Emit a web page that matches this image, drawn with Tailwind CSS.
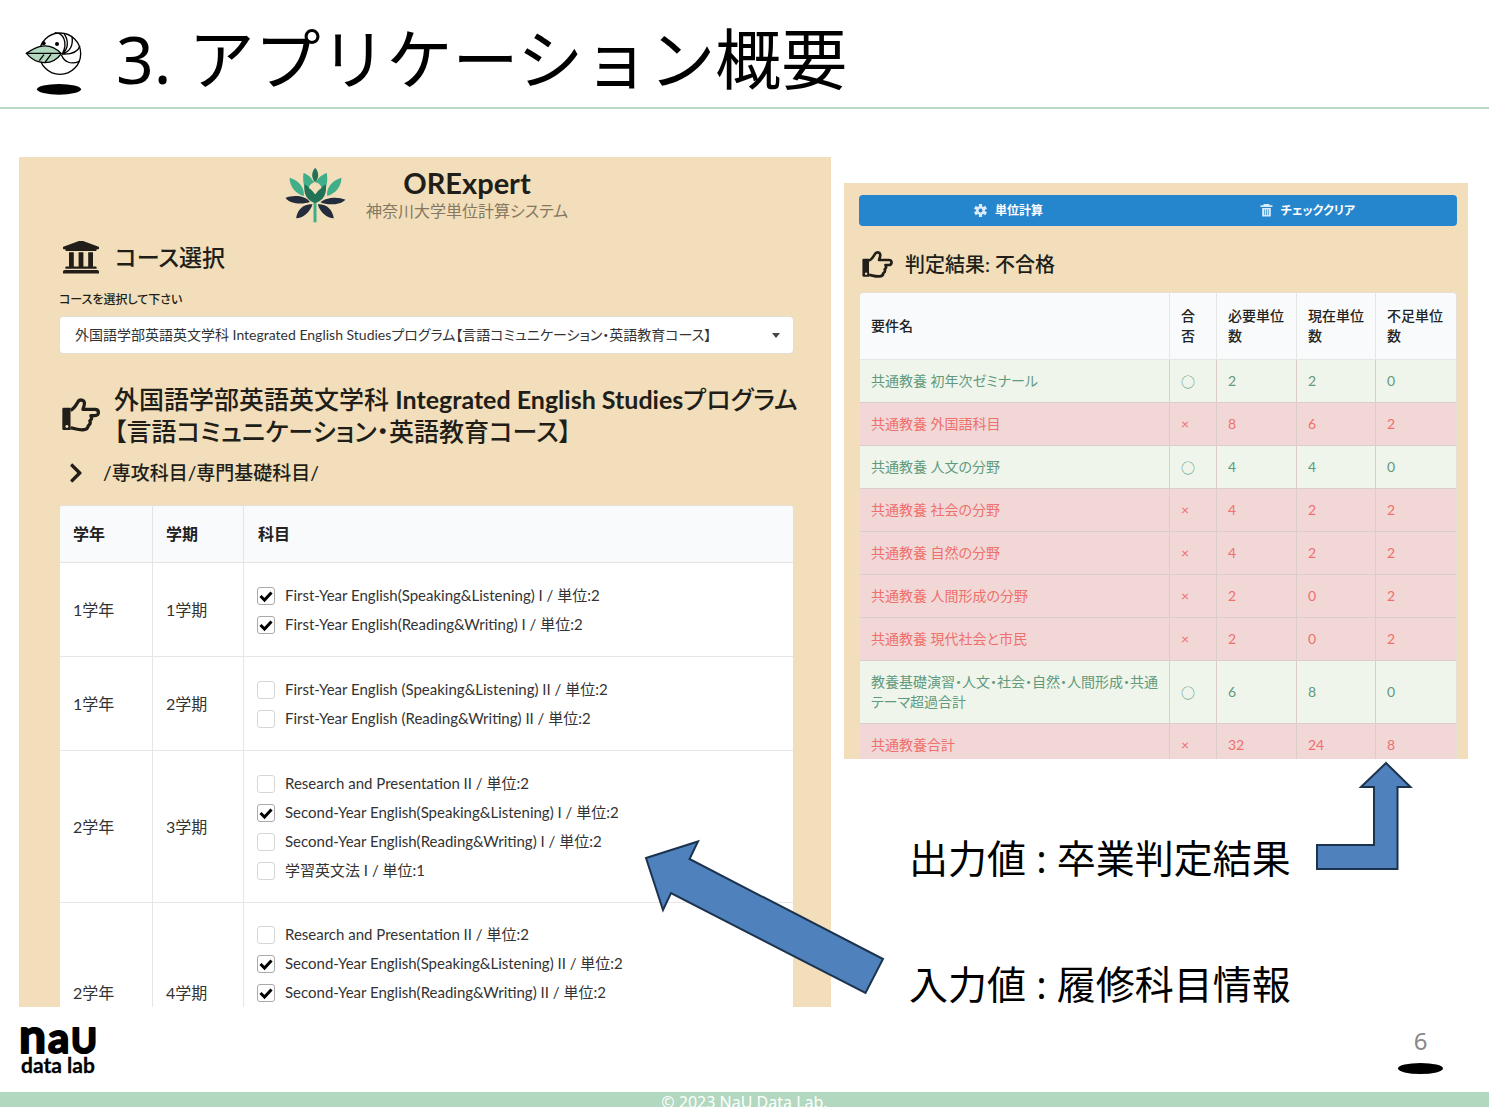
<!DOCTYPE html>
<html lang="ja">
<head>
<meta charset="utf-8">
<meta name="viewport" content="width=device-width, initial-scale=1">
<title>3. アプリケーション概要</title>
<script src="https://cdn.jsdelivr.net/npm/@tailwindcss/browser@4"></script>
</head>
<body class="bg-white font-['Noto_Sans','Noto_Sans_CJK_JP',sans-serif] text-black">
<svg class="hidden" aria-hidden="true">
  <symbol id="hand" viewBox="0 0 116 102">
    <path d="M5 29h21v68H5a4 4 0 0 1-4-4V33a4 4 0 0 1 4-4z"/>
    <circle cx="15" cy="86" r="4.500" fill="#f2deba"/>
    <path d="M26 36c10-2 15-12 22-24 5-10 18-8 20 0 2 7-2 14-4 22h37c13 0 14 19 0 19H88c4 7 2 13-3 16 3 7 0 12-5 15-1 9-7 12-16 12-15 1-24-4-38-6" fill="none" stroke="currentColor" stroke-width="10" stroke-linejoin="round"/>
  </symbol>
</svg>

<header class="flex h-[109px] items-start border-b-2 border-[#b9d6c6] pl-6">
  <svg class="mt-7 h-[70px] w-[62px] shrink-0" viewBox="72 84 186 210" role="img" aria-label="NaU bird">
    <g fill="none" stroke="#000" stroke-width="4">
      <circle cx="180" cy="161" r="62" fill="#fff"/>
      <path d="M164 98c26 0 40 28 24 62M192 101c14 20 14 44-4 59M216 110c4 26-6 46-28 51M240 138c-6 16-22 26-54 24M238 184c-28 12-46 0-54-20"/>
      <path d="M79 160c26-18 66-40 105 1-27 38-75 34-105-1z" fill="#b2d8bf"/>
      <path d="M79 160h105M132 164l-14 18M153 163l-18 24"/>
    </g>
    <circle cx="131" cy="130" r="6"/><circle cx="171" cy="132" r="6"/>
    <ellipse cx="177" cy="268" rx="66" ry="16"/>
  </svg>
  <h1 class="ml-[30px] mt-[10px] text-[66px] leading-[96px] whitespace-nowrap">3. アプリケーション概要</h1>
</header>

<main class="grid grid-cols-[minmax(0,812fr)_minmax(0,624fr)] items-start gap-[13px] pt-12 pr-[21px] pl-[19px] font-['Lato','Noto_Sans_CJK_JP',sans-serif] [font-feature-settings:'palt']">

  <section class="bg-[#f2deba] pt-[10px] pr-[37px] pl-10 text-[#211e19]">
    <div class="flex h-14 items-center justify-center gap-5">
      <svg class="h-14 w-[61px]" viewBox="48 36 182 168" aria-hidden="true">
        <path d="M133 120h9v82h-9z" fill="#3fae89"/>
        <path d="M103 54c14 4 24 14 34 32 10-18 22-28 36-32 4 30 0 60-35 80-33-20-39-50-35-80z" fill="#3fae89"/>
        <path d="M138 38c12 14 12 30 0 44-12-14-12-30 0-44z" fill="#227258"/>
        <path d="M119 99c6-22 32-22 38 0l-19 20z" fill="#f2deba"/>
        <path d="M106 88c10 6 22 16 32 30 10-14 22-24 32-30 4 30-8 50-32 56-24-6-36-26-32-56z" fill="#227258"/>
        <path d="M119 99c6-20 32-20 38 0-8 5-14 11-19 19-5-8-11-14-19-19z" fill="#f2deba"/>
        <path d="M61 68c28 8 46 30 43 55-26-8-42-28-43-55zM217 68c-28 8-46 30-43 55 26-8 42-28 43-55z" fill="#3fae89"/>
        <path d="M49 129c22-10 60-8 73 12-22 8-60 6-73-12zM229 134c-22-10-60-8-75 8 22 10 60 8 75-8zM130 148c-24-2-46 14-49 42 20 0 42-18 49-42zM146 148c24-2 44 14 48 42-20 0-42-18-48-42z" fill="#222c3c"/>
      </svg>
      <div class="text-center">
        <p class="text-[29px] leading-8 font-bold">ORExpert</p>
        <p class="text-base leading-6 text-[#857862]">神奈川大学単位計算システム</p>
      </div>
    </div>

    <h2 class="mt-[14px] flex h-10 items-center gap-4 pl-1 text-[23px] font-medium">
      <svg class="h-[33px] w-9" viewBox="16 42 480 444" preserveAspectRatio="none" fill="currentColor" aria-hidden="true"><path d="M496 128v16a8 8 0 0 1-8 8h-24v12c0 6.627-5.373 12-12 12H60c-6.627 0-12-5.373-12-12v-12H24a8 8 0 0 1-8-8v-16a8 8 0 0 1 4.941-7.392l232-88a7.996 7.996 0 0 1 6.118 0l232 88A8 8 0 0 1 496 128zm-24 304H40c-13.255 0-24 10.745-24 24v16a8 8 0 0 0 8 8h464a8 8 0 0 0 8-8v-16c0-13.255-10.745-24-24-24zM96 192v192H60c-6.627 0-12 5.373-12 12v20h416v-20c0-6.627-5.373-12-12-12h-36V192h-64v192h-64V192h-64v192h-64V192H96z"/></svg>
      コース選択
    </h2>

    <label for="course" class="mt-[13px] block text-xs leading-5 font-medium">コースを選択して下さい</label>
    <div class="relative mt-[6px]">
      <select id="course" class="block h-[38px] w-full appearance-none rounded border border-[#e2dcd2] bg-white pl-[15px] text-sm text-[#333]">
        <option>外国語学部英語英文学科 Integrated English Studiesプログラム【言語コミュニケーション・英語教育コース】</option>
      </select>
      <svg class="pointer-events-none absolute top-[17px] right-[14px] h-[5px] w-2" viewBox="0 0 8 5" fill="#444" aria-hidden="true"><path d="M0 0h8L4 5z"/></svg>
    </div>

    <h2 class="mt-[29px] flex items-center gap-[14px] pl-[3px] text-[25px] leading-8 font-medium">
      <svg class="h-[34px] w-[38px] shrink-0" fill="currentColor" aria-hidden="true"><use href="#hand"/></svg>
      <span class="whitespace-nowrap">外国語学部英語英文学科 <span class="font-bold">Integrated English Studies</span>プログラム<br>【言語コミュニケーション・英語教育コース】</span>
    </h2>

    <h3 class="mt-3 flex h-7 items-center gap-5 pl-[10px] text-[19px] font-medium">
      <svg class="h-[22px] w-[14px]" viewBox="0 0 320 512" fill="currentColor" aria-hidden="true"><path d="M285.476 272.971L91.132 467.314c-9.373 9.373-24.569 9.373-33.941 0l-22.667-22.667c-9.357-9.357-9.375-24.522-.04-33.901L188.505 256 34.484 101.255c-9.335-9.379-9.317-24.544.04-33.901l22.667-22.667c9.373-9.373 24.569-9.373 33.941 0L285.475 239.03c9.373 9.372 9.373 24.568.001 33.941z"/></svg>
      /専攻科目/専門基礎科目/
    </h3>

    <table class="mt-[18px] w-full table-fixed border-separate border-spacing-0 overflow-hidden rounded-t border-x border-t border-[#e6dfd8] bg-white text-left text-[#333]">
      <colgroup><col class="w-[93px]"><col class="w-[91px]"><col></colgroup>
      <thead class="bg-[#f9fafb] text-base text-[#222]">
        <tr>
          <th class="h-[57px] border-r border-b border-[#e4e4e4] px-[13px] font-bold">学年</th>
          <th class="border-r border-b border-[#e4e4e4] px-[13px] font-bold">学期</th>
          <th class="border-b border-[#e4e4e4] px-[14px] font-bold">科目</th>
        </tr>
      </thead>
      <tbody id="courses" class="text-base"></tbody>
    </table>
  </section>

  <div class="relative pt-[26px]">
    <section class="bg-[#f2deba] px-[15px] pt-3 pr-[11px] text-[#211e19]">
      <div class="grid h-[31px] grid-cols-2 overflow-hidden rounded bg-[#2585cd] text-xs font-bold text-white">
        <button type="button" class="flex items-center justify-center gap-2">
          <svg class="h-[13px] w-[13px]" viewBox="0 0 24 24" aria-hidden="true"><g stroke="#dcebf8" stroke-width="6"><path d="M12 0v24M1.600 6l20.800 12M1.600 18l20.800-12"/></g><circle cx="12" cy="12" r="8" fill="#dcebf8"/><circle cx="12" cy="12" r="3.500" fill="#2585cd"/></svg>
          単位計算
        </button>
        <button type="button" class="flex items-center justify-center gap-2">
          <svg class="h-[13px] w-[13px]" viewBox="0 0 24 24" fill="none" stroke="#dcebf8" stroke-width="2.500" aria-hidden="true"><path d="M1 4h22M8 4V1.500h8V4" stroke-width="3"/><path d="M4 7.500h16V23H4z" fill="#dcebf8" stroke="none"/><path d="M8.500 10v10.500M12 10v10.500M15.500 10v10.500" stroke="#2585cd" stroke-width="1.300"/></svg>
          チェッククリア
        </button>
      </div>

      <h2 class="mt-[22px] flex h-8 items-center gap-3 pl-[3px] text-xl font-medium">
        <svg class="h-[27px] w-[31px]" fill="currentColor" aria-hidden="true"><use href="#hand"/></svg>
        判定結果: 不合格
      </h2>

      <table class="mt-3 w-full table-fixed border-separate border-spacing-0 overflow-hidden rounded-t border-x border-t border-[#e6dfd8] text-left text-sm leading-5">
        <colgroup><col><col class="w-[47px]"><col class="w-20"><col class="w-[79px]"><col class="w-20"></colgroup>
        <thead class="bg-[#f9fafb] text-[#222]">
          <tr>
            <th class="border-r border-b border-[#e4e7e4] py-[13px] pl-[11px] font-medium">要件名</th>
            <th class="border-r border-b border-[#e4e7e4] py-[13px] pl-[11px] font-medium">合<br>否</th>
            <th class="border-r border-b border-[#e4e7e4] py-[13px] pl-[11px] font-medium">必要単位<br>数</th>
            <th class="border-r border-b border-[#e4e7e4] py-[13px] pl-[11px] font-medium">現在単位<br>数</th>
            <th class="border-b border-[#e4e7e4] py-[13px] pl-[11px] font-medium">不足単位<br>数</th>
          </tr>
        </thead>
        <tbody id="results"></tbody>
      </table>
    </section>

    <div class="pl-[65px] font-['Noto_Sans','Noto_Sans_CJK_JP',sans-serif] text-[39px] leading-[58px] whitespace-nowrap text-black">
      <p class="mt-[70px]">出力値 : 卒業判定結果</p>
      <p class="mt-[68px]">入力値 : 履修科目情報</p>
    </div>

    <svg class="absolute top-[604px] left-[471px] h-[110px] w-[98px]" viewBox="1315 761 98 110" fill="#4f81bd" stroke="#1c334e" stroke-width="2" aria-hidden="true"><path d="M1386 763l24.500 24H1397.500v82H1317v-24h57v-58H1361z"/></svg>
    <svg class="absolute top-[682px] -left-[200px] h-[157px] w-[242px]" viewBox="644 839 242 157" fill="#4f81bd" stroke="#1c334e" stroke-width="2" aria-hidden="true"><path d="M646 858l52-16.500-8.500 17.500L883 959l-17.500 34L671 893l-8 17z"/></svg>
  </div>
</main>

<footer>
  <div class="flex h-[79px] items-start justify-between pt-[11px] pr-[46px] pl-5">
    <svg class="h-[58px] w-20 overflow-visible" viewBox="0 0 80 58" role="img" aria-label="NaU data lab">
      <g class="font-['Lato',sans-serif] font-bold" stroke="#000" stroke-linejoin="round">
        <text y="29" stroke-width="2"><tspan x="-1" font-size="48">n</tspan><tspan x="28" font-size="42">a</tspan><tspan x="51" font-size="35">U</tspan></text>
        <text x="1" y="49" font-size="21" stroke-width=".3">data lab</text>
      </g>
    </svg>
    <div class="flex flex-col items-center">
      <span class="text-2xl leading-[34px] text-[#888]">6</span>
      <span class="mt-[5px] h-[11px] w-[45px] rounded-[50%] bg-black"></span>
    </div>
  </div>
  <div class="h-[15px] overflow-hidden bg-[#b2d8bf] text-center text-base leading-5 text-white">© 2023 NaU Data Lab.</div>
</footer>

<script>
const courses = [
  ['1学年', '1学期', [[1, 'First-Year English(Speaking&Listening) I / 単位:2'], [1, 'First-Year English(Reading&Writing) I / 単位:2']]],
  ['1学年', '2学期', [[0, 'First-Year English (Speaking&Listening) II / 単位:2'], [0, 'First-Year English (Reading&Writing) II / 単位:2']]],
  ['2学年', '3学期', [[0, 'Research and Presentation II / 単位:2'], [1, 'Second-Year English(Speaking&Listening) I / 単位:2'], [0, 'Second-Year English(Reading&Writing) I / 単位:2'], [0, '学習英文法 I / 単位:1']]],
  ['2学年', '4学期', [[0, 'Research and Presentation II / 単位:2'], [1, 'Second-Year English(Speaking&Listening) II / 単位:2'], [1, 'Second-Year English(Reading&Writing) II / 単位:2']]]
];
const esc = s => s.replace(/&/g, '&amp;');
const item = ([on, text]) => `<label class="flex h-[29px] items-center gap-[10px] text-[15px] text-[#333]"><span class="grid h-[18px] w-[18px]"><input type="checkbox" ${on ? 'checked' : ''} class="peer col-start-1 row-start-1 h-[18px] w-[18px] appearance-none rounded-[3px] border border-[#d6d6d6] bg-white checked:border-[#aaa]"><svg class="pointer-events-none invisible col-start-1 row-start-1 h-[18px] w-[18px] peer-checked:visible" viewBox="0 0 18 18" fill="none" stroke="#000" stroke-width="3" aria-hidden="true"><path d="M3.500 9l4 4 7-7.500"/></svg></span>${esc(text)}</label>`;
document.getElementById('courses').innerHTML = courses.map(([y, t, list], i) => {
  const last = i === courses.length - 1;
  const edge = last ? 'align-bottom pb-[2px]' : 'border-b';
  const pad = last ? 'pt-[17px]' : 'pt-[18px] pb-[17px]';
  return `<tr><td class="${edge} border-r border-[#e6e6e6] px-[13px]">${y}</td><td class="${edge} border-r border-[#e6e6e6] px-[13px]">${t}</td><td class="${last ? '' : 'border-b'} ${pad} border-[#e6e6e6] px-[13px]">${list.map(item).join('')}</td></tr>`;
}).join('');

const results = [
  ['共通教養 初年次ゼミナール', 1, 2, 2, 0],
  ['共通教養 外国語科目', 0, 8, 6, 2],
  ['共通教養 人文の分野', 1, 4, 4, 0],
  ['共通教養 社会の分野', 0, 4, 2, 2],
  ['共通教養 自然の分野', 0, 4, 2, 2],
  ['共通教養 人間形成の分野', 0, 2, 0, 2],
  ['共通教養 現代社会と市民', 0, 2, 0, 2],
  ['教養基礎演習・人文・社会・自然・人間形成・共通<br>テーマ超過合計', 1, 6, 8, 0],
  ['共通教養合計', 0, 32, 24, 8]
];
document.getElementById('results').innerHTML = results.map(([name, ok, ...n], i) => {
  const tone = ok ? 'bg-[#eff5ea] text-[#5f9a7e]' : 'bg-[#f1d8d7] text-[#ef6f6c]';
  const edge = i === results.length - 1 ? 'pb-1' : 'border-b pb-[11px]';
  const mark = ok ? `<span class="block font-['Noto_Sans_CJK_JP',sans-serif]">○</span>` : '×';
  const cells = [name, mark, ...n];
  return `<tr class="${tone}">${cells.map((c, j) => `<td class="${edge} ${j < 4 ? 'border-r' : ''} border-[#dccdc8] pt-[11px] pl-[11px] whitespace-nowrap">${c}</td>`).join('')}</tr>`;
}).join('');
</script>
</body>
</html>
